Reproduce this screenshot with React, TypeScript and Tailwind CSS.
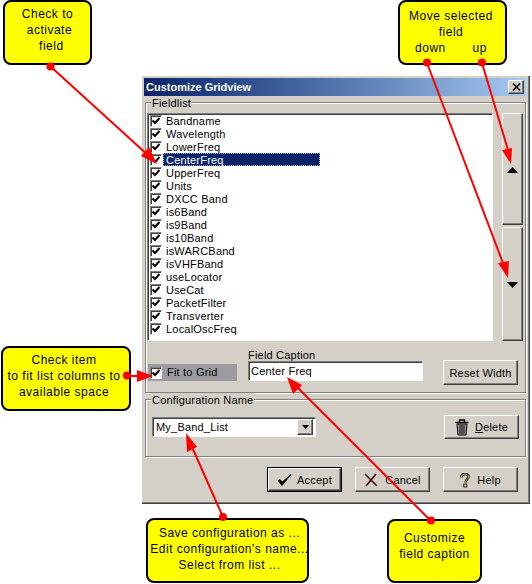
import React from "react";

const raised = "border border-t-white border-l-white border-r-[#404040] border-b-[#404040] shadow-[inset_-1px_-1px_0_#808080] bg-[#d4d0c8]";
const sunken = "border border-t-[#808080] border-l-[#808080] border-r-white border-b-white shadow-[inset_1px_1px_0_#404040]";
const groupBox = "relative border border-[#808080] shadow-[inset_1px_1px_0_white,1px_1px_0_white]";

const fields = ["Bandname","Wavelength","LowerFreq","CenterFreq","UpperFreq","Units","DXCC Band","is6Band","is9Band","is10Band","isWARCBand","isVHFBand","useLocator","UseCat","PacketFilter","Transverter","LocalOscFreq"];

function Check() {
  return (
    <span className={`w-[12px] h-[12px] shrink-0 flex items-center justify-center bg-white ${sunken}`}>
      <svg width="8" height="8" viewBox="0 0 8 8"><path d="M0.5 3.5 L3 6 L7.5 1" fill="none" stroke="#000" strokeWidth="2" /></svg>
    </span>
  );
}

function Callout({ className, lines }: { className: string; lines: string[] }) {
  return (
    <div className={`absolute bg-[#ffff00] border-2 border-black rounded-[8px] flex flex-col items-center justify-center text-[12px] leading-[16px] tracking-[0.5px] text-black ${className}`}>
      {lines.map((l, i) => <div key={i} className="whitespace-pre">{l}</div>)}
    </div>
  );
}

function Btn({ className, children }: { className: string; children: React.ReactNode }) {
  return <div className={`${raised} flex items-center justify-center pt-[1px] text-[11px] tracking-[0.2px] text-black ${className}`}>{children}</div>;
}

export default function App() {
  return (
    <div className="relative w-[532px] h-[584px] bg-white overflow-hidden font-['Liberation_Sans',Arial,sans-serif]">
      {/* Dialog */}
      <div className="absolute left-[141px] top-[75px] w-[388px] h-[428px] bg-[#d4d0c8] p-[3px] shadow-[inset_1px_1px_0_white,inset_-1px_-1px_0_#808080,1px_1px_0_#404040] text-[11px] tracking-[0.2px] text-black">
        <div className="h-[18px] flex items-center justify-between bg-gradient-to-r from-[#0a246a] to-[#a6caf0] px-[2px]">
          <span className="text-white font-bold text-[11px] tracking-normal">Customize Gridview</span>
          <span className={`${raised} w-[16px] h-[14px] flex items-center justify-center`}>
            <svg width="9" height="8" viewBox="0 0 9 8"><path d="M1 0.5 L8 7.5 M8 0.5 L1 7.5" stroke="#000" strokeWidth="1.6" /></svg>
          </span>
        </div>

        {/* Fieldlist group */}
        <div className={`${groupBox} mt-[6px] ml-[1px] w-[381px] h-[291px] flex flex-col`}>
          <span className="absolute left-[5px] -top-[7px] bg-[#d4d0c8] px-[1px] leading-[15px]">Fieldlist</span>
          <div className="flex pt-[10px] pl-[1px]">
            <div className={`w-[346px] h-[228px] bg-white ${sunken} pl-[2px]`}>
              {fields.map((f) => (
                <div key={f} className="flex items-center h-[13px]">
                  <Check />
                  <span className={`ml-[1px] pl-[3px] h-[13px] leading-[14px] ${f === "CenterFreq" ? "w-[157px] bg-[#0a246a] text-white outline-dotted outline-1 outline-[#a0a0a0] -outline-offset-1" : ""}`}>{f}</span>
                </div>
              ))}
            </div>
            <div className="ml-[9px] flex flex-col gap-[2px]">
              <Btn className="w-[21px] h-[112px]">
                <svg width="11" height="6" viewBox="0 0 11 6"><path d="M5.5 0 L11 6 L0 6 Z" fill="#000" /></svg>
              </Btn>
              <Btn className="w-[21px] h-[114px]">
                <svg width="11" height="6" viewBox="0 0 11 6"><path d="M0 0 L11 0 L5.5 6 Z" fill="#000" /></svg>
              </Btn>
            </div>
          </div>
          <div className="flex items-start">
            <div className="ml-[2px] mt-[23px] w-[89px] h-[17px] bg-[#9c9ca0] flex items-center pl-[2px]">
              <Check />
              <span className="ml-[5px] leading-[17px]">Fit to Grid</span>
            </div>
            <div className="ml-[11px] mt-[6px] w-[175px] flex flex-col">
              <span className="h-[14px] leading-[17px]">Field Caption</span>
              <div className={`h-[20px] bg-white ${sunken} pl-[2px] leading-[19px]`}>Center Freq</div>
            </div>
            <Btn className="ml-[20px] mt-[19px] w-[75px] h-[25px]">Reset Width</Btn>
          </div>
        </div>

        {/* Configuration group */}
        <div className={`${groupBox} mt-[6px] ml-[1px] w-[381px] h-[58px] flex items-start pl-[6px] pt-[15px] pr-[6px]`}>
          <span className="absolute left-[5px] -top-[7px] bg-[#d4d0c8] px-[1px] leading-[15px]">Configuration Name</span>
          <div className={`mt-[2px] w-[164px] h-[20px] bg-white ${sunken} pl-[3px] pr-[2px] flex items-center justify-between`}>
            <span>My_Band_List</span>
            <span className={`${raised} w-[16px] h-[16px] flex items-center justify-center`}>
              <svg width="7" height="4" viewBox="0 0 7 4"><path d="M0 0 L7 0 L3.5 4 Z" fill="#000" /></svg>
            </span>
          </div>
          <Btn className="ml-auto w-[75px] h-[24px] gap-[6px]">
            <svg width="14" height="17" viewBox="0 0 14 17" fill="none" stroke="#000">
              <path d="M0.5 3.5 H13.5 M4.5 3 V1 H9.5 V3" strokeWidth="1.4" />
              <path d="M2 5 H12 L11 16 H3 Z" fill="#a0a0a0" />
              <path d="M5 6 V15 M7 6 V15 M9 6 V15" strokeWidth="1" />
            </svg>
            <span><u>D</u>elete</span>
          </Btn>
        </div>

        {/* Bottom buttons */}
        <div className="flex mt-[10px] pl-[123px] gap-[13px]">
          <div className="w-[75px] h-[25px] border border-black">
            <Btn className="w-full h-full gap-[5px]">
              <svg width="15" height="14" viewBox="0 0 15 14"><path d="M1 8 L5 12.5 L14 1.5 L5.2 9 L3 6.5 Z" fill="#000" stroke="#000" strokeWidth="0.8" /></svg>
              Accept
            </Btn>
          </div>
          <Btn className="w-[75px] h-[25px] gap-[7px]">
            <svg width="14" height="14" viewBox="0 0 14 14"><path d="M1 1 L13 13 M12 1 L2 13" stroke="#3a0808" strokeWidth="1.6" /></svg>
            Cancel
          </Btn>
          <Btn className="w-[75px] h-[25px] gap-[7px]">
            <svg width="10" height="15" viewBox="0 0 10 15" fill="none">
              <path d="M1.5 4.5 C1.5 2 3 1 5 1 C7 1 8.5 2.2 8.5 4 C8.5 6 5.5 6.5 5.5 9.5" stroke="#000" strokeWidth="2.4" />
              <path d="M1.5 4.5 C1.5 2 3 1 5 1 C7 1 8.5 2.2 8.5 4 C8.5 6 5.5 6.5 5.5 9.5" stroke="#e8d870" strokeWidth="1" />
              <rect x="3.8" y="11" width="3" height="3" fill="#e8d870" stroke="#000" strokeWidth="0.8" />
            </svg>
            Help
          </Btn>
        </div>
      </div>

      {/* Callouts */}
      <Callout className="left-[3px] top-0 w-[89px] h-[65px] pb-[6px]" lines={["Check to", " activate", "  field"]} />
      <Callout className="left-[398px] top-0 w-[109px] h-[65px] pb-[2px] pr-[3px]" lines={["Move selected", "field", "down       up"]} />
      <Callout className="left-[1px] top-[346px] w-[130px] h-[65px] pb-[6px] pr-[4px]" lines={["Check item", "to fit list columns to", "available space"]} />
      <Callout className="left-[146px] top-[518px] w-[163px] h-[65px] pb-[4px] pl-[4px] tracking-[0.3px]" lines={["Save configuration as ...", "Edit configuration's name...", "Select from list ..."]} />
      <Callout className="left-[387px] top-[519px] w-[95px] h-[64px] pb-[10px]" lines={["Customize", "field caption"]} />

      {/* Arrows */}
      <svg className="absolute inset-0 pointer-events-none" width="532" height="584" viewBox="0 0 532 584">
        <g stroke="#ff0000" strokeWidth="2" fill="#ff0000">
          <circle cx="50.5" cy="66.5" r="4" stroke="none" />
          <line x1="50" y1="66" x2="150" y2="157" />
          <path d="M157 164 L141 156 L149 147 Z" stroke="none" />

          <circle cx="427" cy="62.5" r="4" stroke="none" />
          <line x1="427" y1="63" x2="503" y2="263" />
          <path d="M508 278 L498 263 L509 261 Z" stroke="none" />

          <circle cx="482" cy="62.5" r="4" stroke="none" />
          <line x1="482" y1="63" x2="508" y2="150" />
          <path d="M511 164 L502 150 L512 148 Z" stroke="none" />

          <circle cx="127" cy="375.5" r="4" stroke="none" />
          <line x1="127" y1="376" x2="140" y2="376" />
          <path d="M153 376 L137 370 L137 382 Z" stroke="none" />

          <circle cx="223" cy="517" r="4" stroke="none" />
          <line x1="223" y1="517" x2="192" y2="447" />
          <path d="M186 433 L197 447 L187 452 Z" stroke="none" />

          <circle cx="431" cy="520.5" r="4" stroke="none" />
          <line x1="431" y1="521" x2="297" y2="387" />
          <path d="M287 377 L302 385 L293 394 Z" stroke="none" />
        </g>
      </svg>
    </div>
  );
}
